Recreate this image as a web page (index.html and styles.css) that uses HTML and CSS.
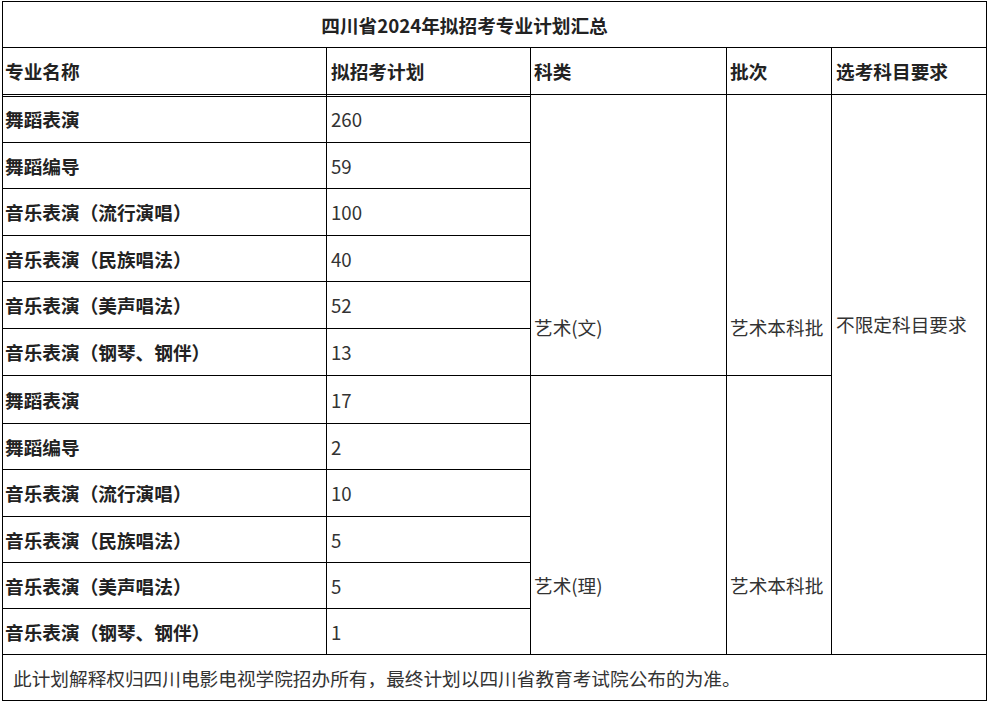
FILE: index.html
```html
<!DOCTYPE html>
<html lang="zh-CN">
<head>
<meta charset="utf-8">
<title>四川省2024年拟招考专业计划汇总</title>
<link rel="stylesheet" href="styles.css">
</head>
<body>
<div class="plan">
  <div class="cell title">四川省2024年拟招考专业计划汇总</div>

  <div class="cell head">专业名称</div>
  <div class="cell head num">拟招考计划</div>
  <div class="cell head">科类</div>
  <div class="cell head">批次</div>
  <div class="cell head wide">选考科目要求</div>

  <div class="cell name first">舞蹈表演</div>
  <div class="cell num first">260</div>
  <div class="cell span type-a">艺术(文)</div>
  <div class="cell span batch-a">艺术本科批</div>
  <div class="cell span req">不限定科目要求</div>

  <div class="cell name">舞蹈编导</div>
  <div class="cell num">59</div>
  <div class="cell name">音乐表演（流行演唱）</div>
  <div class="cell num">100</div>
  <div class="cell name">音乐表演（民族唱法）</div>
  <div class="cell num">40</div>
  <div class="cell name">音乐表演（美声唱法）</div>
  <div class="cell num">52</div>
  <div class="cell name">音乐表演（钢琴、钢伴）</div>
  <div class="cell num">13</div>

  <div class="cell name">舞蹈表演</div>
  <div class="cell num">17</div>
  <div class="cell span type-b">艺术(理)</div>
  <div class="cell span batch-b">艺术本科批</div>

  <div class="cell name">舞蹈编导</div>
  <div class="cell num">2</div>
  <div class="cell name">音乐表演（流行演唱）</div>
  <div class="cell num">10</div>
  <div class="cell name">音乐表演（民族唱法）</div>
  <div class="cell num">5</div>
  <div class="cell name">音乐表演（美声唱法）</div>
  <div class="cell num">5</div>
  <div class="cell name">音乐表演（钢琴、钢伴）</div>
  <div class="cell num">1</div>

  <div class="cell note">此计划解释权归四川电影电视学院招办所有，最终计划以四川省教育考试院公布的为准。</div>
</div>
</body>
</html>
```

FILE: styles.css
```css
html, body {
  margin: 0;
  padding: 0;
  background: #fff;
}

body {
  font-family: "Noto Sans CJK SC", "Microsoft YaHei", sans-serif;
  font-size: 18.67px;
  color: #333;
}

.plan {
  margin: 1px 0 0 2px;
  width: 985px;
  box-sizing: border-box;
  border: 1px solid #000;
  background: #000;
  display: grid;
  gap: 1px;
  grid-template-columns: 323px 203px 195px 104px 154px;
  grid-template-rows: 45px 46px 47px 45px 46px 45px 46px 46px 47px 45px 46px 45px 45px 45px 45px;
}

.cell {
  background: #fff;
  display: flex;
  align-items: center;
  padding-left: 3px;
  line-height: 28px;
  white-space: nowrap;
  overflow: hidden;
}

.title {
  grid-column: 1 / span 5;
  justify-content: center;
  padding-left: 0;
  padding-right: 60px;
  font-weight: 700;
  color: #222;
}

.head {
  font-weight: 700;
  color: #222;
}

.name {
  font-weight: 700;
  color: #222;
  padding-left: 2px;
}

.head:first-child,
.plan > .head:nth-child(2) {
  padding-left: 2px;
}

.num {
  padding-left: 4px;
}

.wide {
  padding-left: 4px;
}

.first {
  box-shadow: inset 0 1px 0 #fff, inset 0 2px 0 #000;
}

.span {
  align-items: flex-start;
}

.type-a {
  grid-column: 3;
  grid-row: 3 / span 6;
  padding-top: 218px;
}

.batch-a {
  grid-column: 4;
  grid-row: 3 / span 6;
  padding-top: 218px;
}

.req {
  grid-column: 5;
  grid-row: 3 / span 12;
  padding-top: 215px;
  padding-left: 4px;
}

.type-b {
  grid-column: 3;
  grid-row: 9 / span 6;
  padding-top: 195px;
}

.batch-b {
  grid-column: 4;
  grid-row: 9 / span 6;
  padding-top: 195px;
}

.note {
  grid-column: 1 / span 5;
  padding-left: 10px;
}
```
